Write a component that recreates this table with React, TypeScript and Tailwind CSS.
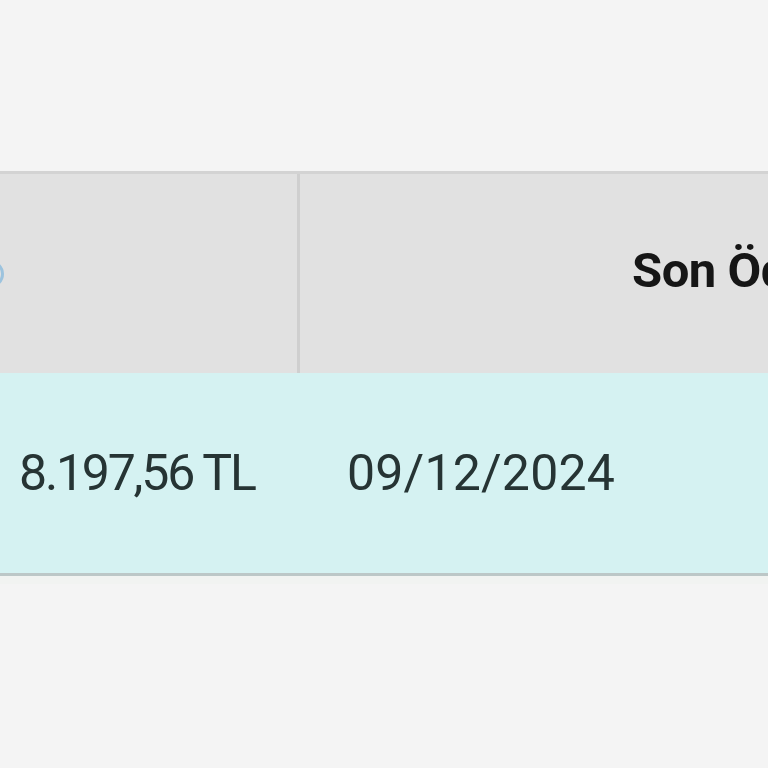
const rows = [{ amount: '8.197,56 TL', due: '09/12/2024' }]

export default function App() {
  return (
    <div className="min-h-screen w-full overflow-hidden bg-[#f4f4f4] font-['Roboto',sans-serif]">
      <div className="h-[171px]" />
      <div className="border-t-[3px] border-[#d3d3d3] bg-[#e1e1e1]">
        <div className="grid h-[199px] grid-cols-[300px_1fr]">
          {/* first column header, cut off on the left */}
          <div className="flex items-center border-r-[3px] border-[#cfcfcf]">
            <div className="-ml-[24px] h-[28px] w-[28px] rounded-full border-[3px] border-[#9cc3de]" />
          </div>
          <div className="flex items-center whitespace-nowrap pl-[332px] pb-[6px]">
            <span className="text-[49px] font-bold leading-none tracking-[-0.5px] text-[#161616]">
              Son Ödeme Tarihi
            </span>
          </div>
        </div>
      </div>
      {rows.map((r) => (
        <div
          key={r.due}
          className="grid h-[203px] grid-cols-[300px_1fr] border-b-[3px] border-[#bcc7c7] bg-[#d5f2f2]"
        >
          <div className="flex items-center whitespace-nowrap pl-[19px]">
            <span className="text-[50px] leading-none tracking-[-2.2px] text-[#263434]">{r.amount}</span>
          </div>
          <div className="flex items-center whitespace-nowrap pl-[47px]">
            <span className="text-[50px] leading-none tracking-[0.2px] text-[#263434]">{r.due}</span>
          </div>
        </div>
      ))}
      <div className="h-[8px] bg-[#f1f3f1]" />
    </div>
  )
}
